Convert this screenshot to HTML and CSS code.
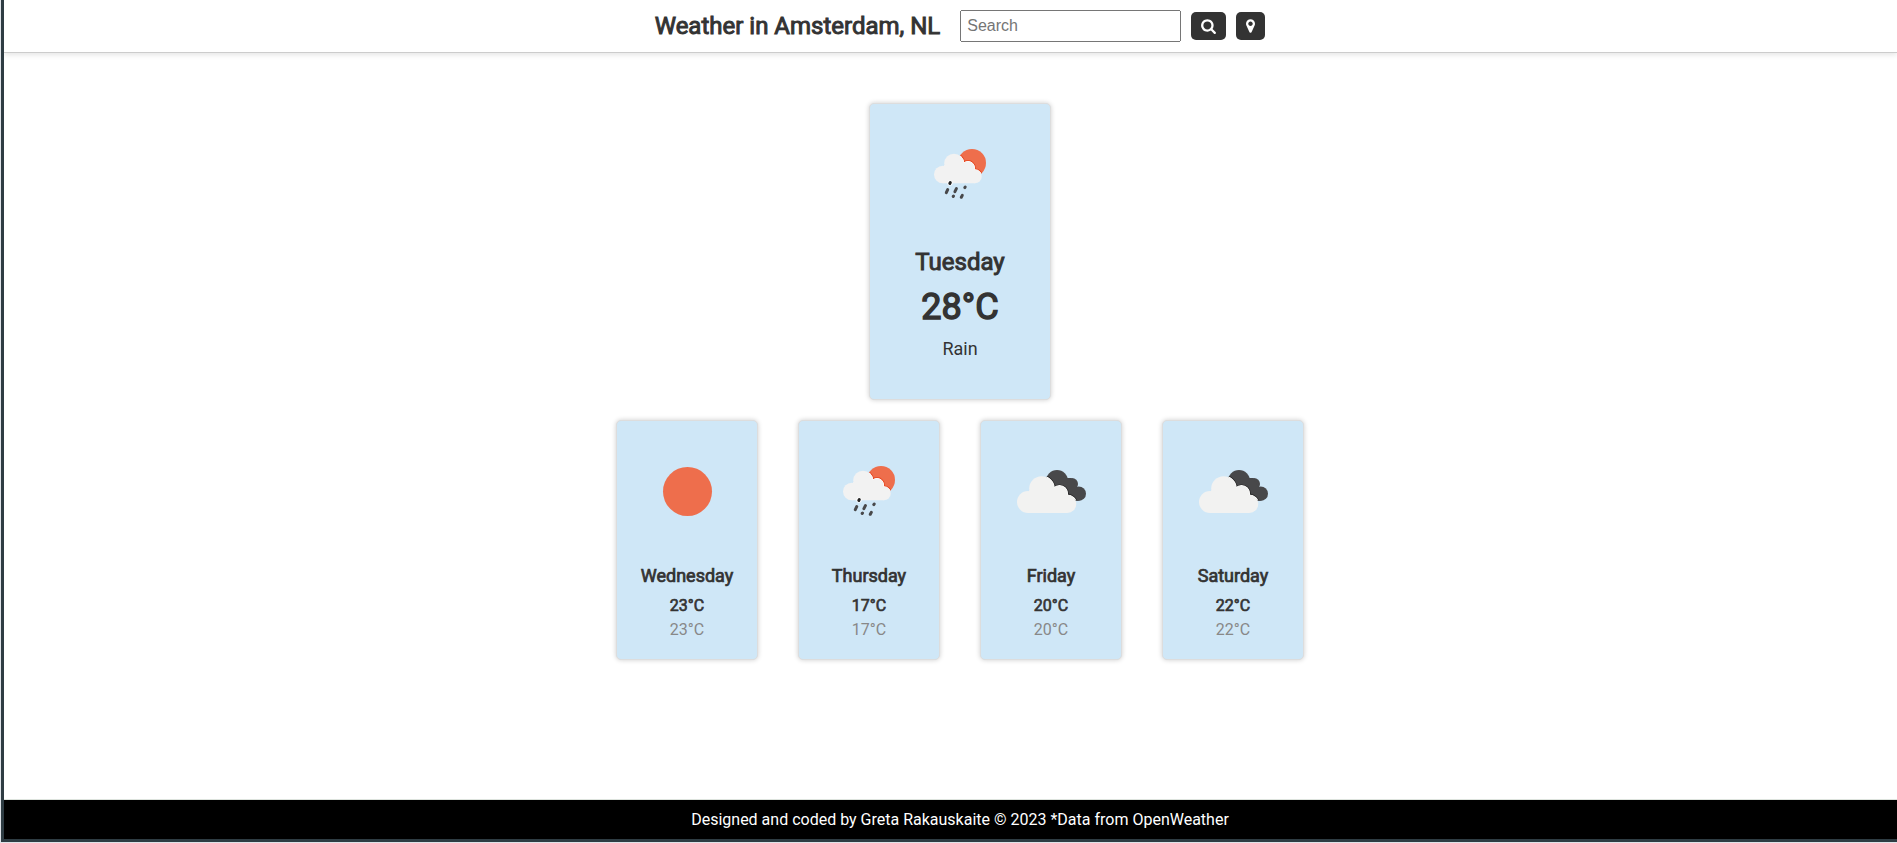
FILE: index.html
```html
<!DOCTYPE html>
<html lang="en">
<head>
<meta charset="utf-8">
<title>Weather in Amsterdam, NL</title>
<link rel="stylesheet" href="styles.css">
</head>
<body>
<svg class="sprite" aria-hidden="true">
  <defs>
    <clipPath id="sun-clip"><circle cx="62" cy="39" r="14"/></clipPath>
    <clipPath id="dark-clip"><circle cx="56" cy="40" r="11"/><circle cx="71" cy="43" r="6"/><circle cx="77.7" cy="52.7" r="7.3"/><path d="M56 36H72V58H60z"/></clipPath>
    <g id="small-cloud">
      <circle cx="32.8" cy="50.5" r="8.8"/><circle cx="44" cy="39.5" r="9.8"/><circle cx="58" cy="44" r="6.6"/><circle cx="64.9" cy="52.5" r="6.8"/><path d="M34 41H58L65 50V59.3H33z"/>
    </g>
    <g id="large-cloud">
      <circle cx="27" cy="61" r="11"/><circle cx="40.7" cy="47.7" r="12.5"/><circle cx="58.5" cy="52.7" r="8"/><circle cx="66.3" cy="63" r="9"/><path d="M28.300 49H60L66.300 60V72H27z"/>
    </g>
    <symbol id="sun" viewBox="0 0 100 100"><circle cx="50.500" cy="50.500" r="24.500" fill="#ee6e4c"/></symbol>
    <symbol id="rain" viewBox="0 0 100 100">
      <circle cx="62" cy="39" r="14" fill="#ee6e4c"/>
      <use href="#small-cloud" clip-path="url(#sun-clip)" fill="#e64a24" stroke="#e64a24" stroke-width="2.600"/>
      <use href="#small-cloud" clip-path="url(#sun-clip)" fill="#fff" stroke="#fff" stroke-width="1"/>
      <use href="#small-cloud" fill="#f2f2f2"/>
      <circle cx="40" cy="59" r="2.600" fill="#fff"/>
      <g stroke="#48484a" stroke-width="3" stroke-linecap="round">
        <path d="M39.800 59.500L40.300 58.500" stroke="#222"/>
        <path d="M36.300 68.600L37.700 65.600M44.900 67.600L46.400 64.600M54.800 63.600L55.200 63M43.200 72.400L43.500 72.100M51.300 73.300L52.300 71.400"/>
      </g>
    </symbol>
    <symbol id="clouds" viewBox="0 0 100 100">
      <g fill="#48484a"><circle cx="56" cy="40" r="11"/><circle cx="71" cy="43" r="6"/><circle cx="77.700" cy="52.700" r="7.300"/><path d="M57 37H70L77 49V60L60 58z"/></g>
      <use href="#large-cloud" clip-path="url(#dark-clip)" fill="#222" stroke="#222" stroke-width="2.600"/>
      <use href="#large-cloud" clip-path="url(#dark-clip)" fill="#fff" stroke="#fff" stroke-width="1.200"/>
      <use href="#large-cloud" fill="#f2f2f1"/>
    </symbol>
  </defs>
</svg>

<header class="top-bar">
  <h1 class="city">Weather in Amsterdam, NL</h1>
  <form class="search">
    <input class="search-input" type="text" placeholder="Search" aria-label="Search">
    <button class="icon-button" type="button" aria-label="Search city">
      <svg width="15" height="16" viewBox="0 0 1664 1792"><path d="M1152 832q0-185-131.500-316.500t-316.500-131.500-316.500 131.500-131.500 316.500 131.500 316.500 316.500 131.500 316.500-131.500 131.500-316.500zm512 832q0 52-38 90t-90 38q-54 0-90-38l-343-342q-179 124-399 124-143 0-273.500-55.500t-225-150-150-225-55.500-273.500 55.500-273.500 150-225 225-150 273.500-55.500 273.500 55.500 225 150 150 225 55.500 273.500q0 220-124 399l343 343q37 37 37 90z"/></svg>
    </button>
    <button class="icon-button" type="button" aria-label="Use my location">
      <svg width="9" height="16" viewBox="384 0 1024 1792"><path d="M1152 640q0-106-75-181t-181-75-181 75-75 181 75 181 181 75 181-75 75-181zm256 0q0 109-33 179l-364 774q-16 33-47.500 52t-67.500 19-67.500-19-46.500-52l-365-774q-33-70-33-179 0-212 150-362t362-150 362 150 150 362z"/></svg>
    </button>
  </form>
</header>

<main class="forecast">
  <section class="card card-today">
    <svg class="weather-icon"><use href="#rain"/></svg>
    <h2 class="day">Tuesday</h2>
    <p class="high">28°C</p>
    <p class="summary">Rain</p>
  </section>
  <div class="week">
    <section class="card">
      <svg class="weather-icon"><use href="#sun"/></svg>
      <h2 class="day">Wednesday</h2>
      <p class="high">23°C</p>
      <p class="low">23°C</p>
    </section>
    <section class="card">
      <svg class="weather-icon"><use href="#rain"/></svg>
      <h2 class="day">Thursday</h2>
      <p class="high">17°C</p>
      <p class="low">17°C</p>
    </section>
    <section class="card">
      <svg class="weather-icon"><use href="#clouds"/></svg>
      <h2 class="day">Friday</h2>
      <p class="high">20°C</p>
      <p class="low">20°C</p>
    </section>
    <section class="card">
      <svg class="weather-icon"><use href="#clouds"/></svg>
      <h2 class="day">Saturday</h2>
      <p class="high">22°C</p>
      <p class="low">22°C</p>
    </section>
  </div>
</main>

<footer class="credits">Designed and coded by Greta Rakauskaite © 2023 *Data from OpenWeather</footer>
</body>
</html>
```
FILE: styles.css
```css
* {
  box-sizing: border-box;
}

html {
  padding: 0 0 1px 1px;
  background: #dfe3e8;
}

body {
  display: flex;
  flex-direction: column;
  min-height: calc(100vh - 1px);
  margin: 0;
  border: solid #2e3c43;
  border-width: 0 0 3px 3px;
  background: #fff;
  color: #333;
  font-family: Roboto, "Liberation Sans", sans-serif;
  font-size: 16px;
  line-height: 19px;
}

h1, h2, p {
  margin: 0;
  font-weight: 400;
}

.sprite {
  position: absolute;
  width: 0;
  height: 0;
}

.top-bar,
.forecast,
.credits {
  padding-left: 19px;
}

.top-bar {
  display: flex;
  align-items: center;
  justify-content: center;
  gap: 20px;
  padding-top: 10px;
  padding-bottom: 10px;
  border-bottom: 1px solid #ccc;
  box-shadow: 0 2px 5px rgba(0, 0, 0, 0.1);
}

.city,
.day,
.high {
  -webkit-text-stroke: 0.04em currentColor;
}

.city {
  font-size: 24px;
  line-height: 28px;
}

.search {
  display: flex;
  align-items: center;
  gap: 10px;
}

.search-input {
  width: 221px;
  height: 32px;
  padding: 5px;
  font: 16px "Liberation Sans", Arial, sans-serif;
}

.search-input::placeholder {
  color: #757575;
}

.icon-button {
  display: flex;
  padding: 6px 10px;
  border: 0;
  border-radius: 5px;
  background: #333;
  cursor: pointer;
}

.icon-button svg {
  fill: #fff;
}

.forecast {
  display: flex;
  flex: 1;
  flex-direction: column;
  align-items: center;
  gap: 20px;
  padding-top: 50px;
}

.week {
  display: flex;
  gap: 40px;
}

.card {
  display: flex;
  flex-direction: column;
  align-items: center;
  width: 142px;
  padding: 20px;
  border: 1px solid #ddd;
  border-radius: 5px;
  background: #cfe7f7;
  box-shadow: 0 0 5px rgba(0, 0, 0, 0.2);
}

.weather-icon {
  width: 100px;
  height: 100px;
  margin-bottom: 24px;
}

.day {
  margin-bottom: 10px;
  font-size: 18px;
  line-height: 21px;
}

.high {
  margin-bottom: 5px;
}

.low {
  color: #888;
}

.card-today {
  width: 182px;
  padding-bottom: 40px;
}

.card-today .day {
  font-size: 24px;
  line-height: 28px;
}

.card-today .high {
  margin-bottom: 10px;
  font-size: 36px;
  line-height: 42px;
}

.summary {
  font-size: 18px;
  line-height: 21px;
}

.credits {
  padding-top: 10px;
  padding-bottom: 10px;
  border-top: 1px solid #dde3dd;
  background: #000;
  color: #fff;
  text-align: center;
}
```
